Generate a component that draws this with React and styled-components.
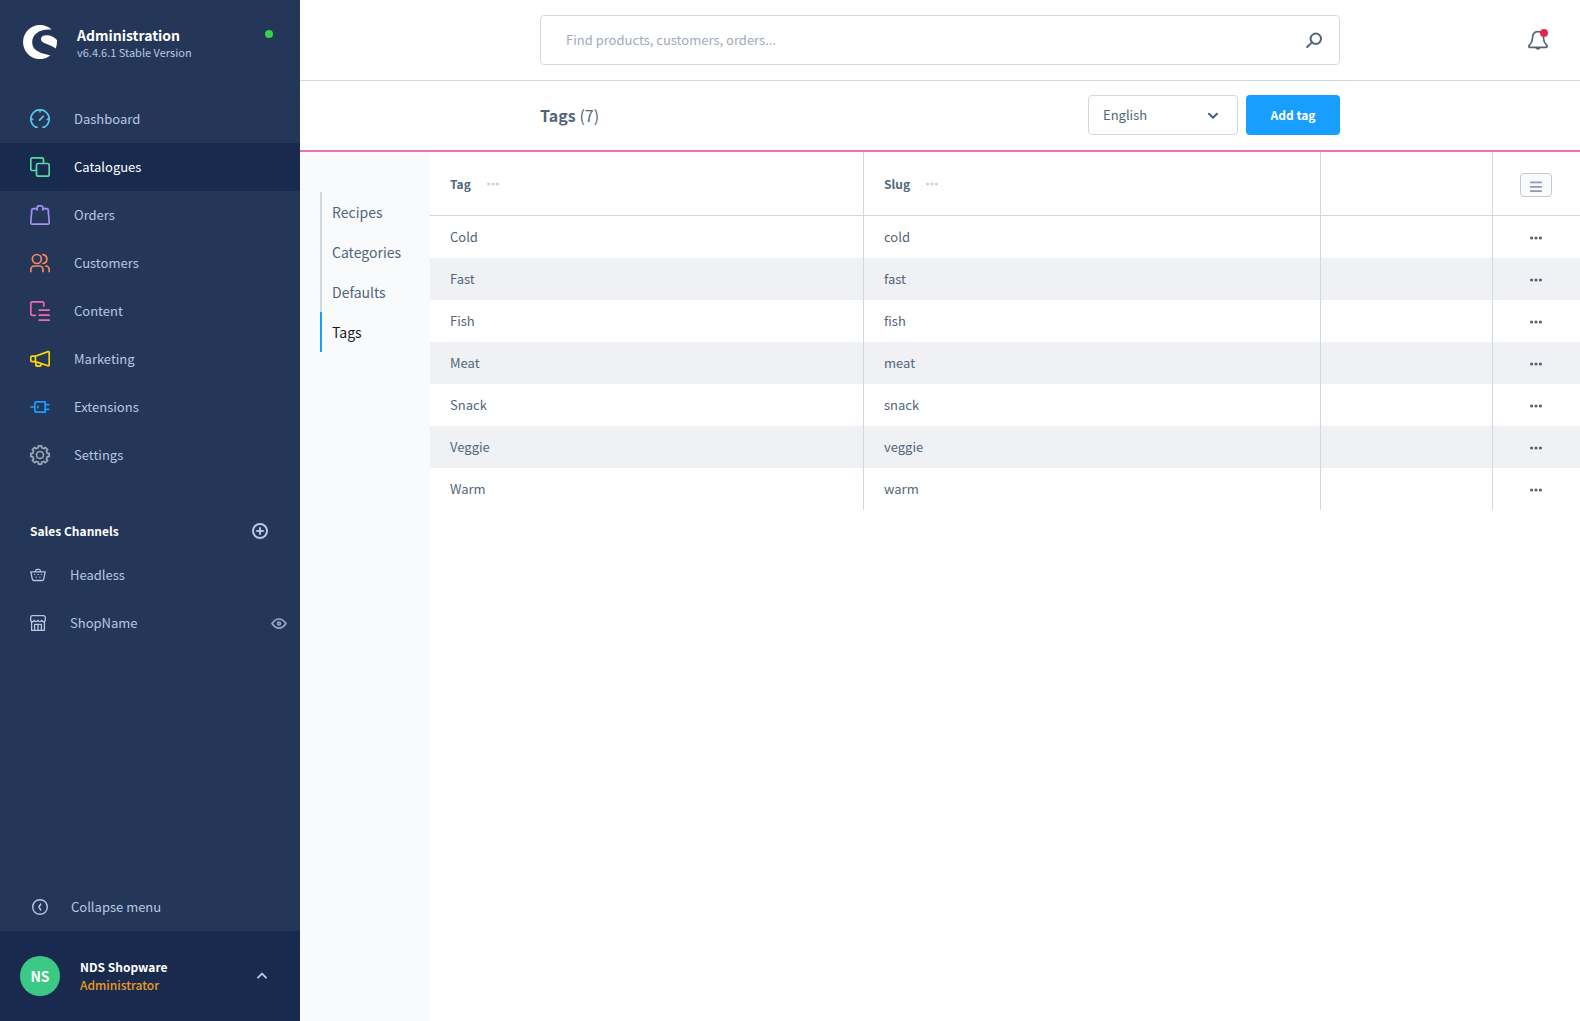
import React, { useState } from 'react';
import styled, { createGlobalStyle, css } from 'styled-components';

const GlobalStyle = createGlobalStyle`
  *,
  *::before,
  *::after {
    box-sizing: border-box;
  }

  body {
    margin: 0;
    background-color: #fff;
    color: #52667a;
    font-family: "Noto Sans CJK SC", "Open Sans", sans-serif;
    font-size: 13px;
    line-height: 18px;
  }

  button,
  input,
  select {
    font: inherit;
    color: inherit;
  }

  button {
    padding: 0;
    border: none;
    background: none;
    cursor: pointer;
  }

  a {
    color: inherit;
    text-decoration: none;
  }

  ul {
    margin: 0;
    padding: 0;
    list-style: none;
  }

  svg {
    display: block;
    flex-shrink: 0;
  }
`;

const Icon = styled.svg`
  width: ${({ $size }) => $size || 20}px;
  height: ${({ $size }) => $size || 20}px;
  fill: none;
  stroke: ${({ $color }) => $color || 'currentColor'};
  stroke-width: ${({ $stroke }) => $stroke || 1.7};
  stroke-linecap: round;
  stroke-linejoin: round;
`;

const Layout = styled.div`
  display: flex;
  min-height: 100vh;
`;

const Sidebar = styled.aside`
  display: flex;
  flex-direction: column;
  flex: 0 0 300px;
  background-color: #243758;
  color: #b8c7e0;
`;

const SidebarHeader = styled.header`
  display: flex;
  align-items: flex-start;
  height: 95px;
  padding: 25px 27px 0 23px;
`;

const HeaderText = styled.div`
  flex: 1;
  margin-left: 20px;
`;

const AppName = styled.div`
  color: #fff;
  font-size: 14px;
  font-weight: 700;
  line-height: 20px;
`;

const Version = styled.div`
  font-size: 11px;
  line-height: 14px;
`;

const StatusDot = styled.span`
  width: 8px;
  height: 8px;
  margin-top: 5px;
  border-radius: 50%;
  background-color: #37d046;
`;

const NavLink = styled.a`
  display: flex;
  align-items: center;
  gap: 24px;
  height: 48px;
  padding: 0 13px 0 30px;

  ${({ $active }) =>
    $active &&
    css`
      background-color: #182b4e;
      color: #fff;
    `}

  span {
    flex: 1;
  }
`;

const ChannelHeader = styled.div`
  display: flex;
  align-items: center;
  justify-content: space-between;
  height: 32px;
  margin: 36px 32px 4px 30px;
  color: #fff;
  font-size: 12px;
  font-weight: 700;

  button {
    color: #b8c7e0;
  }
`;

const CollapseButton = styled.button`
  display: flex;
  align-items: center;
  gap: 23px;
  height: 48px;
  margin-top: auto;
  padding: 0 32px;
`;

const UserBar = styled.button`
  display: flex;
  align-items: center;
  height: 90px;
  padding: 0 32px 0 20px;
  background-color: #182b4e;
  text-align: left;
`;

const Avatar = styled.span`
  display: flex;
  align-items: center;
  justify-content: center;
  width: 40px;
  height: 40px;
  margin-right: 20px;
  border-radius: 50%;
  background-color: #3cc986;
  color: #fff;
  font-size: 14px;
  font-weight: 700;
`;

const UserName = styled.span`
  display: flex;
  flex: 1;
  flex-direction: column;
  color: #fff;
  font-size: 12px;
  font-weight: 700;

  small {
    color: #ec9a1f;
    font-size: 12px;
    font-weight: 500;
  }
`;

const Page = styled.div`
  display: flex;
  flex: 1;
  flex-direction: column;
  min-width: 0;
`;

const TopBar = styled.header`
  display: grid;
  grid-template-columns: 1fr minmax(0, 800px) 1fr;
  align-items: center;
  height: 81px;
  border-bottom: 1px solid #d1d9e0;
`;

const SearchBox = styled.label`
  display: flex;
  grid-column: 2;
  align-items: center;
  height: 50px;
  padding: 0 17px 0 25px;
  border: 1px solid #d1d9e0;
  border-radius: 4px;

  input {
    flex: 1;
    padding: 0;
    border: none;
    outline: none;
  }

  input::placeholder {
    color: #9fabb7;
    opacity: 1;
  }
`;

const BellButton = styled.button`
  position: relative;
  justify-self: end;
  margin-right: 32px;
  color: #52667a;
`;

const BellBadge = styled.span`
  position: absolute;
  top: -1px;
  right: 0;
  width: 8px;
  height: 8px;
  border-radius: 50%;
  background-color: #de294c;
`;

const SmartBar = styled.div`
  display: grid;
  grid-template-columns: 1fr minmax(0, 800px) 1fr;
  height: 71px;
  padding-top: 14px;
  border-bottom: 2px solid #f06eb1;
`;

const SmartBarInner = styled.div`
  display: flex;
  grid-column: 2;
  align-items: center;
  gap: 8px;
  height: 40px;
`;

const Title = styled.h1`
  flex: 1;
  margin: 0;
  font-size: 16px;
  font-weight: 700;
  line-height: 24px;

  span {
    font-weight: 400;
  }
`;

const SelectWrap = styled.div`
  position: relative;
  width: 150px;

  select {
    width: 100%;
    height: 40px;
    padding: 0 14px;
    border: 1px solid #d1d9e0;
    border-radius: 4px;
    background-color: #fff;
    appearance: none;
  }

  svg {
    position: absolute;
    top: 12px;
    right: 17px;
    pointer-events: none;
  }
`;

const PrimaryButton = styled.button`
  min-width: 94px;
  height: 40px;
  padding: 0 20px;
  border-radius: 4px;
  background-color: #189eff;
  color: #fff;
  font-size: 12px;
  font-weight: 700;
`;

const Content = styled.div`
  display: flex;
  flex: 1;
`;

const SideNav = styled.nav`
  flex: 0 0 130px;
  padding: 40px 20px;
  background-color: #f9fafb;
`;

const SideNavLink = styled.a`
  display: flex;
  align-items: center;
  height: 40px;
  padding-left: 10px;
  border-left: 2px solid ${({ $active }) => ($active ? '#189eff' : '#d1d9e0')};
  color: ${({ $active }) => ($active ? '#16191d' : '#52667a')};
  font-size: 14px;
`;

const TableArea = styled.main`
  flex: 1;
  min-width: 0;
`;

const Table = styled.table`
  width: 100%;
  border-spacing: 0;
  table-layout: fixed;
`;

const Cell = styled.td`
  height: 42px;
  padding: 0 20px;
  text-align: left;

  &:not(:last-child) {
    border-right: 1px solid #d1d9e0;
  }

  &:last-child {
    padding: 2px 2px 0 0;
  }
`;

const HeadCell = styled(Cell)`
  height: 64px;
  border-bottom: 1px solid #d1d9e0;
  font-size: 12px;
  font-weight: 700;
`;

const Row = styled.tr`
  &:nth-child(even) {
    background-color: #eff1f4;
  }
`;

const ColumnLabel = styled.div`
  display: flex;
  align-items: center;
  gap: 16px;

  button {
    color: #ccd3da;
  }
`;

const DotsButton = styled.button`
  display: block;
  margin: 0 auto;
  color: #52667a;
`;

const ColumnsButton = styled.button`
  display: flex;
  align-items: center;
  justify-content: center;
  width: 32px;
  height: 24px;
  margin: 0 auto;
  border: 1px solid #c2cbd6;
  border-radius: 4px;
  background-color: #f9fafb;
  color: #8c9aaf;
`;

// Walks around the wheel once, stepping out and back in for every tooth
const gearPath = (teeth, outer, inner) => {
  const step = 360 / teeth;
  const point = (radius, deg) => {
    const rad = ((deg - 90) * Math.PI) / 180;
    return `${(10 + radius * Math.cos(rad)).toFixed(2)} ${(10 + radius * Math.sin(rad)).toFixed(2)}`;
  };
  const parts = [];
  for (let i = 0; i < teeth; i += 1) {
    const a = i * step;
    parts.push(
      point(inner, a - 13),
      point(outer, a - 10),
      point(outer, a + 10),
      point(inner, a + 13),
    );
  }
  return `M${parts.join('L')}Z`;
};

const Logo = () => (
  <svg width="34" height="34" viewBox="0 0 34 34" fill="#fff" aria-hidden="true">
    <path d="M28.6 4.6A17 17 0 1 0 27.4 30.6C22 28.4 9.2 27.6 9.2 17.2C9.2 9.4 16.4 3.6 28.6 4.6Z" />
    <path d="M33.9 15C31.4 12 27.6 10.3 23.8 10.3C20.4 10.3 18 11.8 18 14.2C18 18.6 27 18.8 32.8 23.4C33.8 20.6 34.2 17.8 33.9 15Z" />
  </svg>
);

const Dots = () => (
  <svg width="12" height="4" viewBox="0 0 12 4" fill="currentColor" aria-hidden="true">
    <circle cx="1.6" cy="2" r="1.6" />
    <circle cx="6" cy="2" r="1.6" />
    <circle cx="10.4" cy="2" r="1.6" />
  </svg>
);

const menuItems = [
  {
    label: 'Dashboard',
    color: '#5bc5e6',
    icon: (
      <>
        <path d="M7 18.2H5.8A9.2 9.2 0 1 1 14.2 18.2H13" />
        <path d="M9.6 11.2L13.2 7.4M1 10.4h1.6M17.4 10.4H19M10 1.4v1.4" />
      </>
    ),
  },
  {
    label: 'Catalogues',
    color: '#57d9a3',
    active: true,
    icon: (
      <>
        <path d="M6 13.5H2.4A1.6 1.6 0 0 1 .8 11.9V2.4A1.6 1.6 0 0 1 2.4 .8h9.5a1.6 1.6 0 0 1 1.6 1.6V6" />
        <rect x="6.5" y="6.5" width="12.7" height="12.7" rx="1.6" />
      </>
    ),
  },
  {
    label: 'Orders',
    color: '#a092f0',
    icon: (
      <>
        <path d="M4.6 3.6H3.2a1.4 1.4 0 0 0-1.4 1.3L.8 17.6a1.5 1.5 0 0 0 1.5 1.6h15.4a1.5 1.5 0 0 0 1.5-1.6L18.2 4.9a1.4 1.4 0 0 0-1.4-1.3H15.4" />
        <path d="M4.6 3.6H7.2V2.4A1.6 1.6 0 0 1 8.8 .8h2.4a1.6 1.6 0 0 1 1.6 1.6V3.6h2.6M7.2 3.6V5M12.8 3.6V5" />
      </>
    ),
  },
  {
    label: 'Customers',
    color: '#f88962',
    icon: (
      <>
        <circle cx="6.9" cy="6" r="4.5" />
        <path d="M13 1.6a4.5 4.5 0 0 1 0 8.9M.8 18.6v-2.2A3.4 3.4 0 0 1 4.2 13h5.4a3.4 3.4 0 0 1 3.4 3.4v2.2M15.8 13a3.4 3.4 0 0 1 3.4 3.4v2.2" />
      </>
    ),
  },
  {
    label: 'Content',
    color: '#f468b2',
    icon: (
      <>
        <path d="M5.4 14.4H2.4A1.6 1.6 0 0 1 .8 12.8V2.4A1.6 1.6 0 0 1 2.4 .8h9.8a1.6 1.6 0 0 1 1.6 1.6V5" />
        <path d="M9.2 9.2h10M9.2 14.2h10M9.2 19.2h10" />
      </>
    ),
  },
  {
    label: 'Marketing',
    color: '#ffd700',
    icon: (
      <>
        <path d="M5.4 7.2H1.9A1.1 1.1 0 0 0 .8 8.3v3.2a1.1 1.1 0 0 0 1.1 1.1h3.5ZM5.4 7.2L18 2.6a.9.9 0 0 1 1.2.9v12.4a.9.9 0 0 1-1.2.9L5.4 12.6" />
        <path d="M5.8 12.8v2.4a2 2 0 0 0 2 2h1.2a2 2 0 0 0 2-2v-.6" />
      </>
    ),
  },
  {
    label: 'Extensions',
    color: '#189eff',
    icon: (
      <>
        <path d="M.8 10h4M6.8 4.8h8.4v10.4H6.8a2 2 0 0 1-2-2V6.8a2 2 0 0 1 2-2Z" />
        <path d="M7.8 9.4v1.2M15.2 7.6h3.6M15.2 12.4h3.6" />
      </>
    ),
  },
  {
    label: 'Settings',
    color: '#9aa8b5',
    icon: (
      <>
        <path d={gearPath(8, 9.3, 7.5)} />
        <circle cx="10" cy="10" r="3.5" />
      </>
    ),
  },
];

const channels = [
  {
    label: 'Headless',
    icon: (
      <>
        <path d="M.8 4.8h14.4L13.6 12.4a1.4 1.4 0 0 1-1.4 1.1H3.8a1.4 1.4 0 0 1-1.4-1.1ZM5.6 4.8V4A1.6 1.6 0 0 1 7.2 2.4h1.6A1.6 1.6 0 0 1 10.4 4v.8" />
        <path d="M4.6 7.4h.1M8 7.4h.1M11.4 7.4h.1M6.2 10.2h.1M9.8 10.2h.1" />
      </>
    ),
  },
  {
    label: 'ShopName',
    visible: true,
    icon: (
      <>
        <path d="M1.6 6.4v8.9h12.8V6.4M2.4.7h11.2a1.7 1.7 0 0 1 1.7 1.7v2.2a1.8 1.8 0 0 1-3.6.6 1.9 1.9 0 0 1-3.7 0 1.9 1.9 0 0 1-3.7 0 1.8 1.8 0 0 1-3.6-.6V2.4A1.7 1.7 0 0 1 2.4.7Z" />
        <path d="M4.6 15.2V9.4h6.8v5.8M8 9.4v5.8" />
      </>
    ),
  },
];

const sections = ['Recipes', 'Categories', 'Defaults', 'Tags'];

const tags = ['Cold', 'Fast', 'Fish', 'Meat', 'Snack', 'Veggie', 'Warm'];

const App = () => {
  const [search, setSearch] = useState('');

  return (
    <>
      <GlobalStyle />
      <Layout>
        <Sidebar>
          <SidebarHeader>
            <Logo />
            <HeaderText>
              <AppName>Administration</AppName>
              <Version>v6.4.6.1 Stable Version</Version>
            </HeaderText>
            <StatusDot />
          </SidebarHeader>
          <nav aria-label="Main menu">
            <ul>
              {menuItems.map((item) => (
                <li key={item.label}>
                  <NavLink href="#" $active={item.active}>
                    <Icon viewBox="0 0 20 20" $color={item.color} aria-hidden="true">
                      {item.icon}
                    </Icon>
                    <span>{item.label}</span>
                  </NavLink>
                </li>
              ))}
            </ul>
          </nav>
          <ChannelHeader>
            Sales Channels
            <button type="button" aria-label="Add sales channel">
              <Icon viewBox="0 0 16 16" $size={16} $stroke={2} aria-hidden="true">
                <circle cx="8" cy="8" r="7" />
                <path d="M8 5v6M5 8h6" />
              </Icon>
            </button>
          </ChannelHeader>
          <ul>
            {channels.map((channel) => (
              <li key={channel.label}>
                <NavLink href="#">
                  <Icon viewBox="0 0 16 16" $size={16} $stroke={1.3} aria-hidden="true">
                    {channel.icon}
                  </Icon>
                  <span>{channel.label}</span>
                  {channel.visible && (
                    <Icon viewBox="0 0 16 16" $size={16} $color="#98a9c4" aria-hidden="true">
                      <path d="M1 8.6C3.4 5.2 5.4 4 8 4s4.6 1.200 7 4.600C12.600 12 10.600 13.200 8 13.200S3.400 12 1 8.600Z" />
                      <circle cx="8" cy="8.6" r="1.4" />
                    </Icon>
                  )}
                </NavLink>
              </li>
            ))}
          </ul>
          <CollapseButton type="button">
            <Icon viewBox="0 0 16 16" $size={16} $stroke={1.4} aria-hidden="true">
              <circle cx="8" cy="8" r="7.3" />
              <path d="M8.8 5L6.8 8l2 3" />
            </Icon>
            Collapse menu
          </CollapseButton>
          <UserBar type="button">
            <Avatar>NS</Avatar>
            <UserName>
              NDS Shopware
              <small>Administrator</small>
            </UserName>
            <Icon viewBox="0 0 12 12" $size={12} $stroke={2} aria-hidden="true">
              <path d="M2 7.6L6 3.6l4 4" />
            </Icon>
          </UserBar>
        </Sidebar>

        <Page>
          <TopBar>
            <SearchBox>
              <input
                type="text"
                aria-label="Search"
                placeholder="Find products, customers, orders..."
                value={search}
                onChange={(e) => setSearch(e.target.value)}
              />
              <Icon viewBox="0 0 16 16" $size={16} $stroke={2} aria-hidden="true">
                <circle cx="9.8" cy="6.8" r="5.2" />
                <path d="M6 10.400L1.200 15" />
              </Icon>
            </SearchBox>
            <BellButton type="button" aria-label="Notifications">
              <Icon viewBox="0 0 20 20" aria-hidden="true">
                <path d="M4.400 8.400C4.400 4.200 6 1.600 10 1.600S15.600 4.200 15.600 8.400C15.600 12.600 17.400 13.800 18.900 15.400C19.500 16.400 19 17.400 18 17.400H2C1 17.400 .5 16.400 1.100 15.400C2.600 13.800 4.400 12.600 4.400 8.400Z" />
                <path d="M8.200 17.800a1.900 1.700 0 0 0 3.600 0" />
              </Icon>
              <BellBadge />
            </BellButton>
          </TopBar>

          <SmartBar>
            <SmartBarInner>
              <Title>
                Tags <span>(7)</span>
              </Title>
              <SelectWrap>
                <select aria-label="Language" defaultValue="en">
                  <option value="en">English</option>
                  <option value="de">Deutsch</option>
                </select>
                <Icon viewBox="0 0 16 16" $size={16} $stroke={2.2} aria-hidden="true">
                  <path d="M4 6.8l4 4 4-4" />
                </Icon>
              </SelectWrap>
              <PrimaryButton type="button">Add tag</PrimaryButton>
            </SmartBarInner>
          </SmartBar>

          <Content>
            <SideNav aria-label="Sections">
              {sections.map((section) => (
                <SideNavLink key={section} href="#" $active={section === 'Tags'}>
                  {section}
                </SideNavLink>
              ))}
            </SideNav>
            <TableArea>
              <Table>
                <colgroup>
                  <col style={{ width: 434 }} />
                  <col />
                  <col style={{ width: 172 }} />
                  <col style={{ width: 87 }} />
                </colgroup>
                <thead>
                  <tr>
                    {['Tag', 'Slug'].map((column) => (
                      <HeadCell as="th" key={column} scope="col">
                        <ColumnLabel>
                          {column}
                          <button type="button" aria-label={`${column} column options`}>
                            <Dots />
                          </button>
                        </ColumnLabel>
                      </HeadCell>
                    ))}
                    <HeadCell />
                    <HeadCell>
                      <ColumnsButton type="button" aria-label="Table settings">
                        <Icon viewBox="0 0 16 16" $size={16} aria-hidden="true">
                          <path d="M2.8 5.4h10.4M2.8 9.8h10.4M2.8 14.200h10.4" />
                        </Icon>
                      </ColumnsButton>
                    </HeadCell>
                  </tr>
                </thead>
                <tbody>
                  {tags.map((tag) => (
                    <Row key={tag}>
                      <Cell>{tag}</Cell>
                      <Cell>{tag.toLowerCase()}</Cell>
                      <Cell />
                      <Cell>
                        <DotsButton type="button" aria-label={`Actions for ${tag}`}>
                          <Dots />
                        </DotsButton>
                      </Cell>
                    </Row>
                  ))}
                </tbody>
              </Table>
            </TableArea>
          </Content>
        </Page>
      </Layout>
    </>
  );
};

export default App;
